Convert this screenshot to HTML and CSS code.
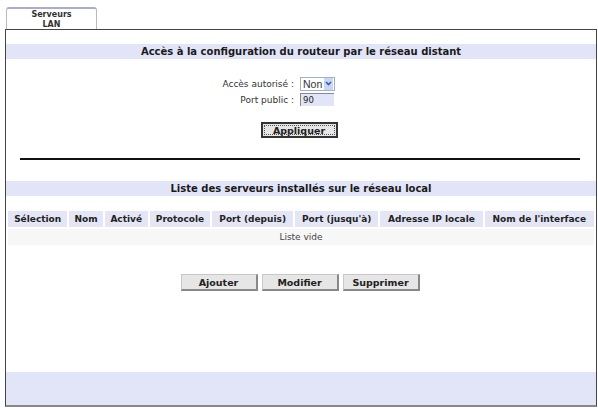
FILE: index.html
```html
<!DOCTYPE html>
<html lang="fr">
<head>
    <meta charset="UTF-8">
    <title>Serveurs LAN</title>
    <link rel="stylesheet" href="styles.css">
</head>
<body>
    <div class="page">
        <div class="tabs">
            <div class="tab">Serveurs<br>LAN</div>
        </div>
        <div class="panel">
            <div class="section-title">Accès à la configuration du routeur par le réseau distant</div>
            <div class="form">
                <div class="form-row">
                    <label>Accès autorisé :</label>
                    <span class="select"><span>Non</span><span class="arrow"><svg width="9" height="9" viewBox="0 0 9 9"><path d="M2 3 L4.5 5.5 L7 3" fill="none" stroke="#3a5aa8" stroke-width="1.6"/></svg></span></span>
                </div>
                <div class="form-row">
                    <label>Port public :</label>
                    <span class="input">90</span>
                </div>
            </div>
            <div class="apply-row">
                <button class="btn apply">Appliquer</button>
            </div>
            <hr class="separator">
            <div class="section-title">Liste des serveurs installés sur le réseau local</div>
            <table class="servers">
                <thead>
                    <tr>
                        <th>Sélection</th>
                        <th>Nom</th>
                        <th>Activé</th>
                        <th>Protocole</th>
                        <th>Port (depuis)</th>
                        <th>Port (jusqu'à)</th>
                        <th>Adresse IP locale</th>
                        <th>Nom de l'interface</th>
                    </tr>
                </thead>
                <tbody>
                    <tr><td colspan="8">Liste vide</td></tr>
                </tbody>
            </table>
            <div class="actions">
                <button class="btn">Ajouter</button>
                <button class="btn">Modifier</button>
                <button class="btn">Supprimer</button>
            </div>
            <div class="footer"></div>
        </div>
    </div>
</body>
</html>
```
FILE: styles.css
```css
body {
    margin: 0;
    padding: 0;
    background: #ffffff;
    font-family: "DejaVu Sans", Verdana, sans-serif;
    font-size: 9px;
    color: #222;
}

.page {
    padding: 7px 1px 0 5px;
}

.tabs {
    display: flex;
    padding-left: 1px;
}

.tab {
    width: 91px;
    height: 22px;
    border: 1px solid #b8b8c8;
    border-top: 2px solid #a8acd0;
    border-bottom: none;
    border-radius: 3px 3px 0 0;
    text-align: center;
    font-weight: bold;
    font-size: 8px;
    line-height: 10px;
    padding-top: 1px;
    box-sizing: border-box;
    color: #333;
}

.panel {
    border: 1px solid #444;
    border-bottom: 2px solid #888;
    height: 378px;
    box-sizing: border-box;
    padding-top: 14px;
    display: flex;
    flex-direction: column;
}

.section-title {
    background: #e2e5f8;
    text-align: center;
    font-weight: bold;
    font-size: 10px;
    height: 15px;
    line-height: 15px;
    color: #1a1a1a;
}

.form {
    margin-top: 17px;
}

.form-row {
    display: flex;
    align-items: center;
    height: 15px;
}

.form-row + .form-row {
    margin-top: 1px;
}

.form-row label {
    width: 288px;
    text-align: right;
    padding-right: 6px;
    color: #333;
}

.select {
    display: inline-flex;
    align-items: center;
    gap: 2px;
    height: 14px;
    border: 1px solid #9fb0d0;
    padding-left: 2px;
    padding-right: 1px;
    font-family: "Liberation Sans", Arial, sans-serif;
    font-size: 10.5px;
    color: #333;
    box-sizing: border-box;
}

.arrow {
    display: inline-flex;
    align-items: center;
    justify-content: center;
    width: 9px;
    height: 12px;
    background: #c8d8f4;
}

.input {
    display: inline-block;
    width: 31px;
    height: 12px;
    line-height: 12px;
    background: #e2e5f8;
    border-left: 1px solid #888;
    border-top: 1px solid #888;
    padding-left: 2px;
    font-size: 8.5px;
    box-sizing: content-box;
}

.apply-row {
    display: flex;
    justify-content: center;
    margin-top: 15px;
    padding-right: 4px;
}

.btn {
    font-family: "DejaVu Sans", Verdana, sans-serif;
    font-weight: bold;
    font-size: 9.5px;
    color: #222;
    width: 77px;
    height: 17px;
    padding: 0;
    background: #e6e6e6;
    border: 1px solid #c8c8c8;
    border-right: 2px solid #888;
    border-bottom: 2px solid #888;
}

.apply {
    border: 2px solid #333;
    outline: 1px dotted #555;
    outline-offset: -4px;
    height: 16px;
}

.separator {
    margin: 20px 16px 0 14px;
    border: none;
    border-top: 2px solid #111;
    height: 0;
}

.panel .separator + .section-title {
    margin-top: 21px;
}

.servers {
    margin-top: 13px;
    width: 100%;
    border-spacing: 2px;
}

.servers th {
    background: #e4e6f6;
    font-weight: bold;
    font-size: 9px;
    height: 16px;
    padding: 0 4px;
    white-space: nowrap;
    color: #222;
}

.servers td {
    background: #f7f7f7;
    text-align: center;
    height: 14px;
    color: #444;
}

.actions {
    display: flex;
    justify-content: center;
    gap: 4px;
    margin-top: 27px;
    padding-right: 2px;
}

.footer {
    margin-top: auto;
    height: 33px;
    background: #e2e5f8;
}
```
